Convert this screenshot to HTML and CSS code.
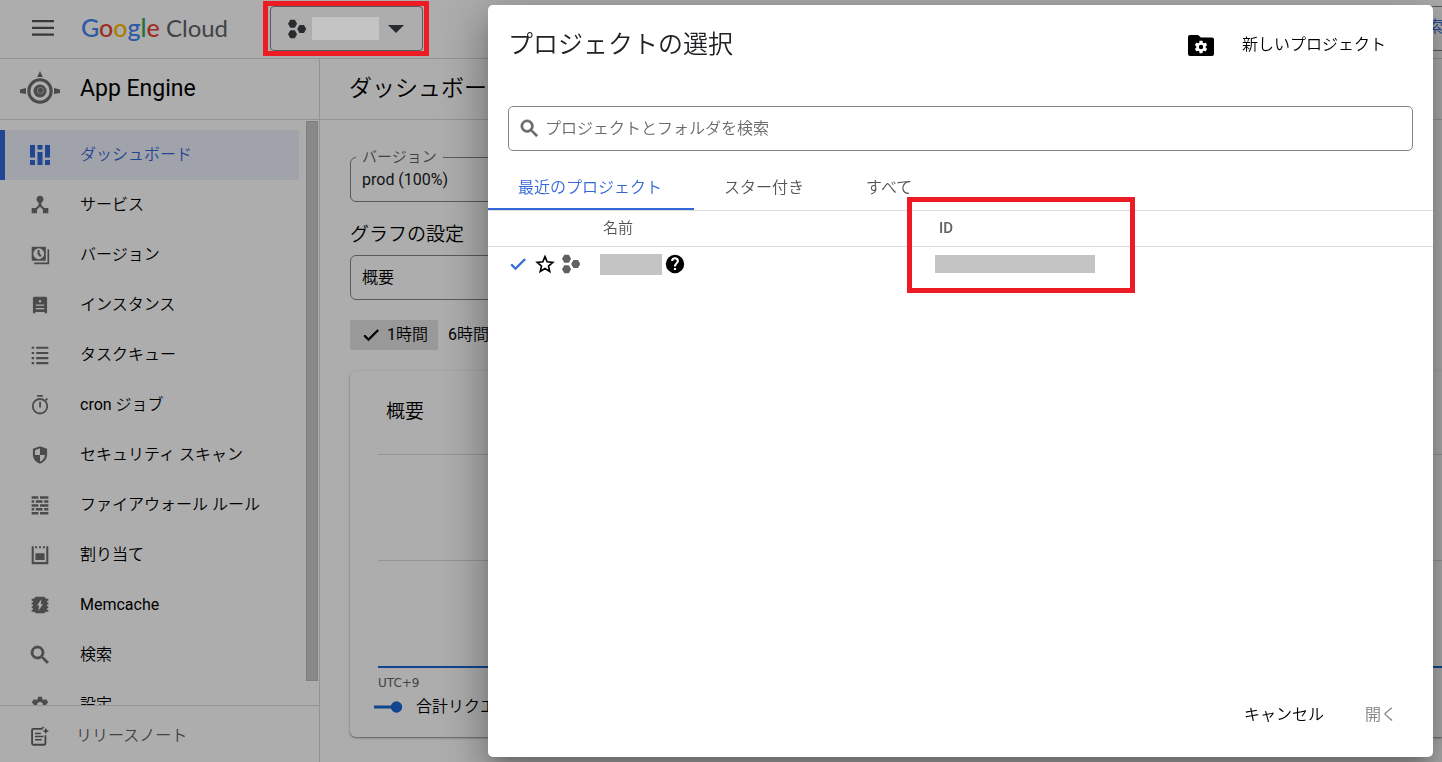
FILE: index.html
```html
<!DOCTYPE html>
<html lang="ja">
<head>
<meta charset="utf-8">
<title>ダッシュボード – App Engine – Google Cloud</title>
<link rel="stylesheet" href="styles.css">
</head>
<body>
<svg class="sprite" aria-hidden="true">
  <symbol id="dots" viewBox="0 0 24 24"><path d="M4.700 2h4.900l2.500 4.300-2.500 4.300H4.700L2.200 6.300zM4.700 13.400h4.900l2.500 4.300L9.600 22H4.700l-2.500-4.300zM14.700 7.700h4.900l2.500 4.300-2.500 4.300h-4.900L12.200 12z"/></symbol>
  <symbol id="search" viewBox="0 0 24 24"><path d="M15.500 14h-.79l-.28-.27A6.471 6.471 0 0 0 16 9.500 6.500 6.500 0 1 0 9.500 16c1.610 0 3.090-.59 4.230-1.570l.27.28v.79l5 4.990L20.490 19l-4.990-5zm-6 0C7.010 14 5 11.990 5 9.500S7.010 5 9.500 5 14 7.010 14 9.500 11.990 14 9.500 14z" stroke="currentColor" stroke-width=".8"/></symbol>
  <symbol id="check" viewBox="0 0 24 24"><path d="M9 16.170L4.830 12l-1.420 1.410L9 19 21 7l-1.410-1.410z" stroke="currentColor" stroke-width="1"/></symbol>
  <symbol id="gear" viewBox="0 0 24 24"><path fill-rule="evenodd" d="M19.430 12.980c.04-.32.070-.64.070-.98s-.03-.66-.07-.98l2.110-1.650c.19-.15.240-.42.120-.64l-2-3.460c-.12-.22-.39-.3-.61-.22l-2.490 1c-.52-.4-1.080-.73-1.690-.98l-.38-2.650C14.460 2.180 14.250 2 14 2h-4c-.25 0-.46.180-.49.420l-.38 2.650c-.61.250-1.170.590-1.690.980l-2.490-1c-.23-.09-.49 0-.61.220l-2 3.460c-.13.220-.07.490.12.640l2.110 1.650c-.04.320-.07.650-.07.980s.03.660.070.980l-2.110 1.650c-.19.150-.24.420-.12.640l2 3.460c.12.220.390.300.610.220l2.490-1c.52.400 1.080.730 1.690.980l.38 2.650c.03.240.240.420.490.420h4c.25 0 .46-.18.490-.42l.38-2.650c.61-.25 1.170-.59 1.690-.98l2.490 1c.23.090.490 0 .61-.22l2-3.460c.12-.22.070-.49-.12-.64zM12 15.500a3.500 3.500 0 1 1 0-7 3.500 3.500 0 0 1 0 7z"/></symbol>
</svg>

<header class="topbar">
  <button class="icon-btn" aria-label="メニュー"><svg viewBox="0 0 24 19"><path d="M1 2h22v2.200H1zM1 8.800h22V11H1zM1 15.500h22v2.200H1z"/></svg></button>
  <a class="logo" href="#" aria-label="Google Cloud"><span class="google"><span class="g-blue">G</span><span class="g-red">o</span><span class="g-yellow">o</span><span class="g-blue">g</span><span class="g-green">l</span><span class="g-red">e</span></span> <span class="cloud">Cloud</span></a>
  <div class="picker-wrap">
    <button class="picker" aria-label="プロジェクトを選択">
      <svg class="picker-dots"><use href="#dots"/></svg>
      <span class="mask mask-picker"></span>
      <svg class="caret" viewBox="0 0 16 8"><path d="M0 0h16L8 8z"/></svg>
    </button>
  </div>
  <div class="top-search"><button class="search-btn">検索</button></div>
</header>

<div class="shell">
  <aside class="sidebar">
    <div class="product">
      <svg class="engine" viewBox="0 0 40 36">
        <circle cx="20" cy="20" r="11.200" fill="none" stroke="currentColor" stroke-width="3"/>
        <path d="M20 0l2.800 6h-5.600zM0 18.500l6-1.500v6l-6-1zM40 18.500l-6-1.500v6l6-1z"/>
        <circle cx="20" cy="20" r="6.500"/><circle cx="20.500" cy="19.500" r="3.600" fill="#aaa"/><circle cx="20.500" cy="19.500" r="2.400"/>
      </svg>
      <span>App Engine</span>
    </div>
    <div class="nav-area">
      <nav class="nav">
        <a class="nav-item active" href="#"><svg viewBox="0 0 24 24"><path d="M0 0h6v15H0zM0 18h6v6H0zM9 0h6v5.500H9zM9 8.500h6V24H9zM18 0h6v15h-6zM18 18h6v6h-6z"/></svg>ダッシュボード</a>
        <a class="nav-item" href="#"><svg viewBox="0 0 24 24"><path d="M12 1a4.200 4.200 0 0 1 1.700 8v3.200l3.400 3.300H22V22h-6.500v-4.700L12 14l-3.500 3.300V22H2v-6.500h4.900l3.400-3.300V9A4.200 4.200 0 0 1 12 1z"/></svg>サービス</a>
        <a class="nav-item" href="#"><svg viewBox="0 0 24 24"><path fill-rule="evenodd" d="M3 2h15q1 0 1 1v15q0 1-1 1H3q-1 0-1-1V3q0-1 1-1zm7.500 2a6.500 6.500 0 1 0 0 13 6.500 6.500 0 0 0 0-13zM9 6h2.500v4l2.500 3-2 1.500-3-3.500z"/><path d="M21 5h2v18H5v-2h16z"/></svg>バージョン</a>
        <a class="nav-item" href="#"><svg viewBox="0 0 24 24"><path fill-rule="evenodd" d="M5.500 2h13Q20.500 2 20.500 3.500V22h-3v-1.500h-11V22h-3V3.500Q3.500 2 5.500 2zm6.500 4a1.500 1.500 0 1 0 0 3 1.500 1.500 0 0 0 0-3zm-5 5.500v1.500h10v-1.500zM7 15.500V17h10v-1.500z"/></svg>インスタンス</a>
        <a class="nav-item" href="#"><svg viewBox="0 0 24 24"><path d="M2 2h3v2.500H2zM7.500 2H22v2.500H7.500zM2 8.300h3v2.500H2zM7.500 8.300H22v2.500H7.500zM2 14.500h3V17H2zM7.500 14.500H22V17H7.500zM2 20.500h3V23H2zM7.500 20.500H22V23H7.500z"/></svg>タスクキュー</a>
        <a class="nav-item mixed" href="#"><svg viewBox="0 0 24 24"><circle cx="12" cy="13.500" r="8.700" fill="none" stroke="currentColor" stroke-width="2.200"/><path d="M8.500 0h7v2.200h-7zM11 8h2.200v7H11zM18 5.500l2-2 1.600 1.600-2 2z"/></svg><span><span class="latin">cron</span> ジョブ</span></a>
        <a class="nav-item" href="#"><svg viewBox="0 0 24 24"><path d="M12 1.500L3.500 4.500v7C3.500 16.500 7 21 12 22.500c5-1.500 8.500-6 8.500-11v-7zM12 12h6c-.5 4-3 7-6 8.100V12H6V6.200l6-2.200z"/></svg>セキュリティ スキャン</a>
        <a class="nav-item" href="#"><svg viewBox="0 0 24 24"><path d="M2 1.500h8v3H2zM12 1.500h10v3H12zM2 6.300h3v3H2zM7 6.300h8v3H7zM17 6.300h5v3h-5zM2 11h8v3H2zM12 11h10v3H12zM2 15.700h3v3H2zM7 15.700h8v3H7zM17 15.700h5v3h-5zM2 20.300h8v3H2zM12 20.300h10v3H12z"/></svg>ファイアウォール ルール</a>
        <a class="nav-item" href="#"><svg viewBox="0 0 24 24"><path d="M2 1.500h2.500v19h15v-19H22V23H2zM6 1.500h2.500V4H6zM10.800 1.500h2.400V4h-2.400zM15.500 1.500H18V4h-2.500zM6.500 10h11v8h-11z"/></svg>割り当て</a>
        <a class="nav-item latin" href="#"><svg viewBox="0 0 24 24"><path fill-rule="evenodd" d="M7 2h10l2.500 2.500H22V7h-1.500v2H22v2.500h-1.500v2H22V16h-1.500v2H22v2h-3l-2 2H7l-2-2H2v-2h1.500v-2H2v-2.500h1.500v-2H2V9h1.500V7H2V4.500h2.500zM13.500 5l-5 7.500H11L10 19l5.500-8H13z"/></svg>Memcache</a>
        <a class="nav-item" href="#"><svg class="wide"><use href="#search"/></svg>検索</a>
        <a class="nav-item" href="#"><svg><use href="#gear"/></svg>設定</a>
      </nav>
      <div class="thumb"></div>
    </div>
    <a class="release" href="#"><svg viewBox="0 0 24 24"><path d="M15 3.500H4Q2.500 3.500 2.500 5v16Q2.500 22.500 4 22.500h13q1.500 0 1.500-1.500V11" fill="none" stroke="currentColor" stroke-width="2.200"/><path d="M6 8h7v1.800H6zM6 11.800h10v1.800H6zM6 15.500h8v1.800H6zM19 2l1.200 2.800L23 6l-2.800 1.200L19 10l-1.200-2.800L15 6l2.800-1.200zM15.500 0l.6 1.400 1.400.6-1.400.6-.6 1.400-.6-1.400-1.400-.6 1.400-.6z"/></svg>リリースノート</a>
  </aside>

  <main class="main">
    <div class="page-head"><h1>ダッシュボード</h1></div>
    <div class="content">
      <fieldset class="field">
        <legend>バージョン</legend>
        <select class="latin" aria-label="バージョン"><option>prod (100%)</option></select>
      </fieldset>
      <h2>グラフの設定</h2>
      <select class="chart-select" aria-label="グラフの設定"><option>概要</option></select>
      <div class="ranges">
        <button class="range on"><svg><use href="#check"/></svg><span><span class="latin">1</span>時間</span></button>
        <button class="range"><span><span class="latin">6</span>時間</span></button>
      </div>
      <section class="card">
        <h3>概要</h3>
        <div class="chart"><div class="cell"></div><div class="cell last"></div></div>
        <div class="axis">UTC+9</div>
        <div class="legend"><svg viewBox="0 0 30 12"><path d="M0 4.500h18v3H0z"/><circle cx="22.500" cy="6" r="5.700"/></svg>合計リクエスト数</div>
      </section>
    </div>
  </main>
</div>

<div class="scrim"></div>

<div class="dialog" role="dialog" aria-modal="true" aria-labelledby="dialog-title">
  <div class="dialog-head">
    <h2 id="dialog-title">プロジェクトの選択</h2>
    <button class="new-project"><svg viewBox="0 0 26 21"><path d="M2 0h8l3 2.500h11q2 0 2 2V19q0 2-2 2H2q-2 0-2-2V2q0-2 2-2z"/><svg class="hole" x="5.500" y="4.500" width="15" height="15"><use href="#gear"/></svg></svg>新しいプロジェクト</button>
  </div>
  <label class="search-box"><svg><use href="#search"/></svg><input type="text" aria-label="プロジェクトとフォルダを検索" placeholder="プロジェクトとフォルダを検索"></label>
  <div class="tabs" role="tablist">
    <button class="tab selected" role="tab" aria-selected="true">最近のプロジェクト</button>
    <button class="tab" role="tab">スター付き</button>
    <button class="tab" role="tab">すべて</button>
  </div>
  <div class="results">
    <table>
      <thead><tr><th class="col-icons"></th><th class="col-name">名前</th><th class="col-id">ID</th></tr></thead>
      <tbody><tr>
        <td><div class="row-icons">
          <svg class="blue"><use href="#check"/></svg>
          <svg class="star" viewBox="0 0 24 24"><path d="M12 3.200l2.600 6.200 6.700.6-5.100 4.400 1.500 6.500L12 17.500l-5.700 3.400 1.500-6.500L2.700 10l6.700-.6z" fill="none" stroke="currentColor" stroke-width="2"/></svg>
          <svg class="grey"><use href="#dots"/></svg>
        </div></td>
        <td><div class="name-cell"><span class="mask mask-name"></span><svg viewBox="0 0 24 24"><path d="M12 1a11 11 0 1 0 0 22 11 11 0 0 0 0-22zm1.300 18.300h-2.600v-2.600h2.600zm2.400-8.500l-1 1.100c-.9.900-1.400 1.500-1.400 3.200h-2.600v-.6c0-1.200.5-2.300 1.400-3.200l1.400-1.400c.4-.4.600-.9.600-1.400a2.100 2.100 0 0 0-4.200 0H7.300a4.700 4.700 0 0 1 9.400 0c0 .9-.4 1.700-1 2.300z"/></svg></div></td>
        <td><span class="mask mask-id"></span></td>
      </tr></tbody>
    </table>
    <div class="highlight"></div>
  </div>
  <div class="actions"><button>キャンセル</button><button disabled>開く</button></div>
</div>
</body>
</html>
```

FILE: styles.css
```css
* { box-sizing: border-box; }
html, body { height: 100%; }
body {
  margin: 0;
  display: flex;
  flex-direction: column;
  overflow: hidden;
  background: #fff;
  color: #000;
  font: 350 16px/24px Roboto, "Noto Sans CJK JP", sans-serif;
}
h1, h2, h3 { margin: 0; font-weight: 350; }
button, input, select { font: inherit; color: inherit; background: none; border: 0; padding: 0; margin: 0; }
a { color: inherit; text-decoration: none; }
svg { display: block; flex: none; fill: currentColor; width: 20px; height: 20px; }
.sprite { position: absolute; width: 0; height: 0; }
.latin { font-weight: 400; }

.topbar {
  flex: none;
  display: flex;
  align-items: flex-start;
  height: 59px;
  padding-top: 1px;
  border-bottom: 1px solid #d9d9d9;
  overflow: hidden;
}
.icon-btn { margin: 17px 0 0 31px; color: #555; }
.icon-btn svg { width: 24px; height: 19px; }
.logo { width: 181px; padding: 10px 0 0 26px; font: 400 24px/32px Lato, sans-serif; white-space: nowrap; }
.google { font-size: 25px; font-weight: 500; }
.g-blue { color: #4285f4; }
.g-red { color: #ea4335; }
.g-yellow { color: #fbbc04; }
.g-green { color: #34a853; }
.cloud { color: #5f6368; }
.picker-wrap { position: relative; margin-left: 27px; padding: 5px 6px 5px 7px; }
.picker-wrap::after { content: ""; position: absolute; z-index: 3; inset: 0; border: 5px solid #ed1c24; }
.picker {
  display: flex;
  align-items: center;
  width: 153px;
  height: 45px;
  padding-left: 15px;
  border: 1px solid #80868b;
  border-radius: 4px;
  color: #3c4043;
}
.picker-dots { width: 22px; height: 22px; }
.caret { width: 16px; height: 8px; margin-left: 9px; }
.mask { display: inline-block; background: #c4c4c4; }
.mask-picker { position: relative; z-index: 3; width: 67px; height: 23px; margin-left: 4px; }
.top-search {
  flex: 1;
  display: flex;
  justify-content: flex-end;
  height: 45px;
  margin: 5px -30px 0 60px;
  padding-right: 28px;
  border: 1px solid #80868b;
  border-radius: 4px;
}
.search-btn { color: #3367d6; height: 40px; }

.shell { flex: 1; min-height: 0; display: flex; }
.sidebar { flex: none; width: 320px; display: flex; flex-direction: column; border-right: 1px solid #d9d9d9; }
.product {
  display: flex;
  align-items: center;
  gap: 20px;
  height: 61px;
  border-bottom: 1px solid #d9d9d9;
  padding: 0 20px;
  font-size: 23px;
  font-weight: 400;
}
.engine { width: 40px; height: 36px; color: #6f6f6f; }
.nav-area { flex: 1; min-height: 0; display: flex; justify-content: space-between; overflow: hidden; }
.nav { width: 299px; padding-top: 10px; }
.nav-item { display: flex; align-items: center; gap: 30px; height: 50px; padding-left: 30px; }
.nav-item svg { color: #6f6f6f; }
.nav-item.active { padding-left: 25px; border-left: 5px solid #3367d6; background: #eef1fc; color: #3367d6; }
.nav-item.active svg { color: #3367d6; }
.nav-item .wide { width: 24px; height: 24px; margin: 0 -2px; }
.thumb { width: 12px; height: 560px; margin: 1px 1px 0 0; background: #c9c9c9; border: 1px solid #bbb; }
.release {
  flex: none;
  display: flex;
  align-items: center;
  gap: 26px;
  height: 57px;
  padding: 4px 0 0 30px;
  border-top: 1px solid #d9d9d9;
  color: #5f6368;
}

.main { flex: 1; min-width: 0; }
.page-head { display: flex; align-items: center; height: 61px; padding-left: 29px; border-bottom: 1px solid #d9d9d9; }
.page-head h1 { font-size: 23px; line-height: 32px; }
.content { padding: 26px 0 0 30px; }
.field { width: 400px; height: 56px; margin: 0; padding: 0 0 0 5px; border: 1px solid #80868b; border-radius: 6px; }
.field legend { padding: 0 6px; color: #5f6368; font-size: 15px; line-height: 22px; }
.field select { width: 100%; height: 24px; padding-left: 6px; appearance: none; color: #202124; font-weight: 400; }
.content h2 { margin-top: 21px; font-size: 19px; line-height: 24px; }
.chart-select {
  display: block;
  width: 400px;
  height: 45px;
  margin-top: 8px;
  padding-left: 11px;
  border: 1px solid #80868b;
  border-radius: 6px;
  appearance: none;
}
.ranges { display: flex; margin-top: 20px; }
.range { display: flex; align-items: center; gap: 6px; height: 30px; padding: 0 10px; border-radius: 2px; }
.range.on { padding-left: 11px; background: #e2e2e2; }
.card {
  height: 366px;
  margin-top: 21px;
  padding: 29px 0 0 24px;
  border-radius: 6px 0 0 6px;
  box-shadow: 0 1px 3px rgba(0, 0, 0, .3), 0 1px 1px rgba(0, 0, 0, .2);
}
.card h3 { padding-left: 12px; font-size: 19px; line-height: 24px; }
.chart { margin: 30px 0 0 4px; border-bottom: 2px solid #1a66d0; }
.cell { height: 106px; border-top: 1px solid #dadada; }
.axis { margin: 3px 0 0 4px; color: #5f6368; font: 12px/24px "DejaVu Sans", sans-serif; }
.legend { display: flex; align-items: center; gap: 12px; }
.legend svg { width: 30px; height: 12px; color: #1a66d0; }

.scrim { position: fixed; z-index: 2; inset: 0; background: rgba(0, 0, 0, .32); }
.dialog {
  position: fixed;
  z-index: 4;
  inset: 5px 9px 5px 488px;
  display: flex;
  flex-direction: column;
  border-radius: 5px;
  background: #fff;
  box-shadow: 0 11px 15px -7px rgba(0, 0, 0, .2), 0 24px 38px 3px rgba(0, 0, 0, .14), 0 9px 46px 8px rgba(0, 0, 0, .2);
}
.dialog-head { display: flex; align-items: center; justify-content: space-between; padding: 20px 47px 0 20px; }
.dialog-head h2 { font-size: 25px; line-height: 40px; color: #202124; }
.new-project { display: flex; align-items: center; gap: 28px; }
.new-project > svg { width: 26px; height: 21px; }
.new-project .hole { width: 15px; height: 15px; color: #fff; }
.search-box {
  display: flex;
  align-items: center;
  gap: 4px;
  height: 45px;
  margin: 41px 20px 0;
  padding: 0 11px 0 9px;
  border: 1px solid #80868b;
  border-radius: 5px;
  color: #666;
}
.search-box svg { width: 23px; height: 23px; }
.search-box input { flex: 1; height: 40px; outline: 0; }
.search-box input::placeholder { color: #6a6a6a; opacity: 1; }
.tabs { display: flex; height: 60px; border-bottom: 1px solid #dadce0; }
.tab { padding: 16px 32px 0 30px; color: #555; border-bottom: 2px solid transparent; }
.tab.selected { color: #3367d6; border-color: #3367d6; }
.results { flex: 1; position: relative; }
table { width: 100%; border-collapse: collapse; table-layout: fixed; }
th { height: 35px; padding: 0; border-bottom: 1px solid #dadce0; text-align: left; font-size: 15px; font-weight: 350; color: #555; }
.col-icons { width: 112px; }
.col-name { width: 335px; padding-left: 3px; }
.col-id { padding-left: 4px; font-weight: 500; color: #616161; }
td { height: 36px; padding: 0; vertical-align: middle; }
.row-icons { display: flex; align-items: center; gap: 7px; padding-left: 20px; }
.blue { color: #3367d6; }
.grey { width: 22px; height: 22px; margin-left: -2px; color: #616161; }
.name-cell { display: flex; align-items: center; gap: 3px; }
.mask-name { width: 62px; height: 21px; }
.mask-id { display: block; width: 160px; height: 18px; }
.highlight { position: absolute; left: 419px; top: -14px; width: 228px; height: 96px; border: 5px solid #ed1c24; }
.actions { display: flex; justify-content: flex-end; gap: 41px; padding: 0 36px 30px; }
.actions button:disabled { color: #808080; }
```
